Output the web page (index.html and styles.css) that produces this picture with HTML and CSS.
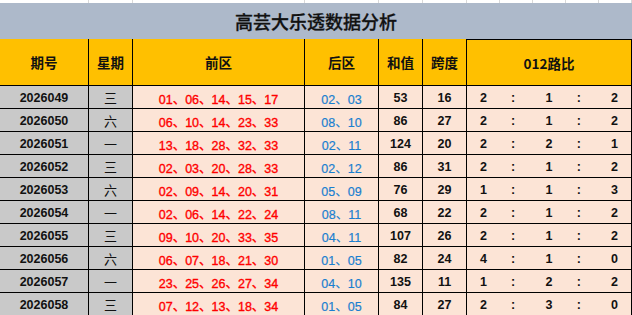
FILE: index.html
```html
<!DOCTYPE html>
<html lang="zh">
<head>
<meta charset="utf-8">
<link rel="stylesheet" href="styles.css">
</head>
<body>
<div class="sheet">
  <div class="topstrip">
    <span class="g g1"></span><span class="g g2"></span><span class="g g3"></span><span class="g g4"></span><span class="g g5"></span><span class="g g6"></span><span class="g gs"></span><span class="g gs"></span><span class="g gs"></span><span class="g gs"></span><span class="g gs last"></span>
  </div>
  <div class="title">高芸大乐透数据分析</div>
  <div class="grid">
    <div class="hd">期号</div>
    <div class="hd">星期</div>
    <div class="hd">前区</div>
    <div class="hd">后区</div>
    <div class="hd">和值</div>
    <div class="hd">跨度</div>
    <div class="hd hd-last">012路比</div>

    <div class="c id">2026049</div><div class="c wk">三</div><div class="c fr">01、06、14、15、17</div><div class="c bk">02、03</div><div class="c num">53</div><div class="c num">16</div><div class="c ratio"><span>2</span><span class="col">:</span><span>1</span><span class="col">:</span><span>2</span></div>
    <div class="c id">2026050</div><div class="c wk">六</div><div class="c fr">06、10、14、23、33</div><div class="c bk">08、10</div><div class="c num">86</div><div class="c num">27</div><div class="c ratio"><span>2</span><span class="col">:</span><span>1</span><span class="col">:</span><span>2</span></div>
    <div class="c id">2026051</div><div class="c wk">一</div><div class="c fr">13、18、28、32、33</div><div class="c bk">02、11</div><div class="c num">124</div><div class="c num">20</div><div class="c ratio"><span>2</span><span class="col">:</span><span>2</span><span class="col">:</span><span>1</span></div>
    <div class="c id">2026052</div><div class="c wk">三</div><div class="c fr">02、03、20、28、33</div><div class="c bk">02、12</div><div class="c num">86</div><div class="c num">31</div><div class="c ratio"><span>2</span><span class="col">:</span><span>1</span><span class="col">:</span><span>2</span></div>
    <div class="c id">2026053</div><div class="c wk">六</div><div class="c fr">02、09、14、20、31</div><div class="c bk">05、09</div><div class="c num">76</div><div class="c num">29</div><div class="c ratio"><span>1</span><span class="col">:</span><span>1</span><span class="col">:</span><span>3</span></div>
    <div class="c id">2026054</div><div class="c wk">一</div><div class="c fr">02、06、14、22、24</div><div class="c bk">08、11</div><div class="c num">68</div><div class="c num">22</div><div class="c ratio"><span>2</span><span class="col">:</span><span>1</span><span class="col">:</span><span>2</span></div>
    <div class="c id">2026055</div><div class="c wk">三</div><div class="c fr">09、10、20、33、35</div><div class="c bk">04、11</div><div class="c num">107</div><div class="c num">26</div><div class="c ratio"><span>2</span><span class="col">:</span><span>1</span><span class="col">:</span><span>2</span></div>
    <div class="c id">2026056</div><div class="c wk">六</div><div class="c fr">06、07、18、21、30</div><div class="c bk">01、05</div><div class="c num">82</div><div class="c num">24</div><div class="c ratio"><span>4</span><span class="col">:</span><span>1</span><span class="col">:</span><span>0</span></div>
    <div class="c id">2026057</div><div class="c wk">一</div><div class="c fr">23、25、26、27、34</div><div class="c bk">04、10</div><div class="c num">135</div><div class="c num">11</div><div class="c ratio"><span>1</span><span class="col">:</span><span>2</span><span class="col">:</span><span>2</span></div>
    <div class="c id">2026058</div><div class="c wk">三</div><div class="c fr">07、12、13、18、34</div><div class="c bk">01、05</div><div class="c num">84</div><div class="c num">27</div><div class="c ratio"><span>2</span><span class="col">:</span><span>3</span><span class="col">:</span><span>0</span></div>
  </div>
</div>
</body>
</html>
```

FILE: styles.css
```css
* { box-sizing: border-box; }
html, body { margin: 0; padding: 0; background: #ffffff; }
body {
  width: 632px;
  height: 315px;
  overflow: hidden;
  font-family: "Liberation Sans", "Noto Sans CJK SC", sans-serif;
}
.sheet { width: 632px; }

.topstrip {
  height: 3px;
  display: grid;
  grid-template-columns: 89px 44px 172px 74px 44px 44px 33px 33px 33px 33px 33px;
  background: #ffffff;
}
.g { border-right: 1px solid #d9d9d9; }

.title {
  height: 36px;
  background: #adb9ca;
  display: flex;
  align-items: center;
  justify-content: center;
  font-family: "Noto Sans CJK SC", sans-serif;
  font-size: 18px;
  font-weight: 500;
  color: #111111;
  padding-bottom: 1px;
  -webkit-text-stroke: 0.3px #111111;
}

.grid {
  display: grid;
  grid-template-columns: 88px 43px 171px 73px 43px 43px 164px;
  grid-template-rows: 46px repeat(10, 22px);
  gap: 1px;
  background: #000000;
  padding-right: 1px;
  height: 276px;
}

.hd {
  background: #ffc000;
  display: flex;
  align-items: center;
  justify-content: center;
  font-family: "Noto Sans CJK SC", sans-serif;
  font-weight: bold;
  font-size: 13.5px;
  color: #111111;
}
.hd-last { border-top: 1px solid #000000; }

.c {
  display: flex;
  align-items: center;
  justify-content: center;
  background: #fce4d6;
  font-size: 12.5px;
  padding-top: 2px;
  color: #111111;
}
.id, .wk { background: #c9c9c9; }
.id { font-weight: bold; }
.wk { font-family: "Noto Sans CJK SC", sans-serif; font-size: 13px; padding-top: 1px; }
.fr { color: #ff0000; -webkit-text-stroke: 0.35px #ff0000; }
.bk { color: #1a7fd0; -webkit-text-stroke: 0.2px #1a7fd0; }
.num { font-weight: bold; }
.ratio {
  display: grid;
  grid-template-columns: repeat(5, 1fr);
  font-weight: bold;
  justify-items: center;
}
.ratio .col { position: relative; left: -3px; }
```
